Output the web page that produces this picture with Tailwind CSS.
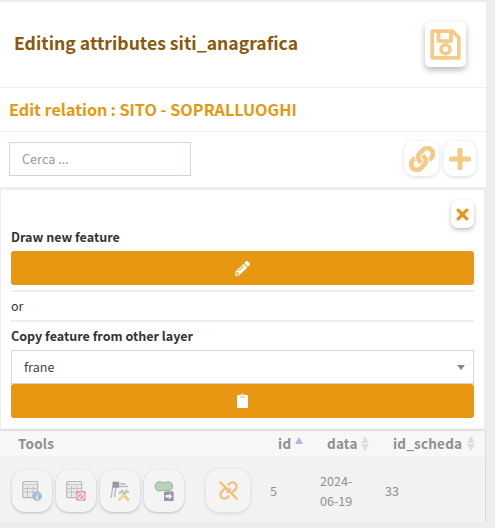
<!DOCTYPE html>
<html lang="en">
<head>
<meta charset="utf-8">
<title>Editing attributes</title>
<script src="https://cdn.jsdelivr.net/npm/@tailwindcss/browser@4"></script>
</head>
<body class="w-[495px] h-[528px] overflow-hidden bg-[#ededed] pt-[2px] text-[#333] font-['Noto_Sans_CJK_SC',sans-serif]">
<main class="w-[486px]">
  <header class="flex h-[86px] items-center justify-between border-b border-[#f0f0f0] bg-white pr-[20px] pl-[14px]">
    <h1 class="mb-[3px] text-[17.6px] leading-6 font-bold whitespace-nowrap text-[#8b590c]">Editing attributes siti_anagrafica</h1>
    <button class="mb-[1px] flex h-[45px] w-[41px] items-center justify-center rounded-[5px] bg-white shadow-[0_3px_6px_rgba(0,0,0,0.28)]">
      <svg class="size-[31px]" viewBox="0 0 31 31" fill="none" stroke="#f4ca87" stroke-width="3.7" stroke-linejoin="round"><path d="M2.2 2.2H22.5L28.8 8.5V28.8H2.2ZM8.5 2.2V12H21V2.2"/><circle cx="15.5" cy="20.3" r="4.5" stroke-width="3.5"/></svg>
    </button>
  </header>
  <div class="flex h-[44px] items-center border-b border-[#f0f0f0] bg-white pb-[1px] pl-[9px]">
    <h2 class="text-[16.2px] leading-6 font-bold whitespace-nowrap text-[#e89712]">Edit relation<span class="ml-[3px]">: SITO - SOPRALLUOGHI</span></h2>
  </div>
  <div class="flex h-[55px] items-center bg-white pr-[10px] pb-[2px] pl-[9px]">
    <input class="h-[34px] w-[182px] border border-[#d2d6de] px-3 text-[12.7px] text-[#555] placeholder:text-[#999]" placeholder="Cerca ...">
    <button class="ml-auto flex h-[35px] w-[35px] items-center justify-center rounded-[10px] bg-white shadow-[0_1px_4px_rgba(0,0,0,0.14)]">
      <svg class="size-[26px]" viewBox="0 0 512 512" fill="#f4ca87" stroke="#f4ca87" stroke-width="14"><path d="M326.612 185.391c59.747 59.809 58.927 155.698.36 214.59-.11.12-.24.25-.36.37l-67.2 67.2c-59.27 59.27-155.699 59.262-214.96 0-59.27-59.26-59.27-155.7 0-214.96l37.106-37.106c9.84-9.84 26.786-3.3 27.294 10.606.648 17.722 3.826 35.527 9.69 52.721 1.986 5.822.567 12.262-3.783 16.612l-13.087 13.087c-28.026 28.026-28.905 73.66-1.155 101.96 28.024 28.579 74.086 28.749 102.325.51l67.2-67.19c28.191-28.191 28.073-73.757 0-101.83-3.701-3.694-7.429-6.564-10.341-8.569a16.037 16.037 0 0 1-6.947-12.606c-.396-10.567 3.348-21.456 11.698-29.806l21.054-21.055c5.521-5.521 14.182-6.199 20.584-1.731a152.482 152.482 0 0 1 20.522 17.197zM467.547 44.449c-59.261-59.262-155.69-59.27-214.96 0l-67.2 67.2c-.12.12-.25.25-.36.37-58.566 58.892-59.387 154.781.36 214.59a152.454 152.454 0 0 0 20.521 17.196c6.402 4.468 15.064 3.789 20.584-1.731l21.054-21.055c8.35-8.35 12.094-19.239 11.698-29.806a16.037 16.037 0 0 0-6.947-12.606c-2.912-2.005-6.64-4.875-10.341-8.569-28.073-28.073-28.191-73.639 0-101.83l67.2-67.19c28.239-28.239 74.3-28.069 102.325.51 27.75 28.3 26.872 73.934-1.155 101.96l-13.087 13.087c-4.35 4.35-5.769 10.79-3.783 16.612 5.864 17.194 9.042 34.999 9.69 52.721.509 13.906 17.454 20.446 27.294 10.606l37.106-37.106c59.271-59.259 59.271-155.699.001-214.959z"/></svg>
    </button>
    <button class="ml-[5px] flex h-[35px] w-[32px] items-center justify-center rounded-[9px] bg-white shadow-[0_1px_4px_rgba(0,0,0,0.14)]">
      <svg class="size-[22px]" viewBox="0 0 22 22" fill="#f4ca87"><rect x="8.500" y="0" width="5" height="22" rx="1.500"/><rect x="0" y="8.500" width="22" height="5" rx="1.500"/></svg>
    </button>
  </div>

  <section class="mt-[3px] ml-[1px] h-[238px] w-[483px] bg-white px-[10px] pt-[10px]">
    <div class="flex justify-end">
      <button class="flex h-[28px] w-[23px] items-center justify-center rounded-[7px] bg-white shadow-[0_2px_4px_rgba(0,0,0,0.25)]">
        <svg class="size-[13px]" viewBox="0 0 13 13" stroke="#e89712" stroke-width="3.2" stroke-linecap="round"><path d="M2.2 2.2L10.8 10.8M10.8 2.2L2.2 10.8"/></svg>
      </button>
    </div>
    <div class="mt-[-1px] h-[24px] text-[12.55px] leading-5 font-bold">Draw new feature</div>
    <button class="flex h-[34px] w-full items-center justify-center rounded-[3px] bg-[#e89712]">
      <svg class="size-[15px]" viewBox="0 0 512 512" fill="#fff"><path d="M497.900 142.100l-46.100 46.100c-4.700 4.700-12.300 4.700-17 0l-111-111c-4.700-4.700-4.700-12.300 0-17l46.100-46.100c18.700-18.700 49.100-18.700 67.900 0l60.100 60.100c18.800 18.700 18.800 49.100 0 67.900zM284.200 99.800L21.600 362.400.4 483.900c-2.900 16.400 11.400 30.600 27.800 27.800l121.500-21.300 262.600-262.600c4.700-4.700 4.700-12.300 0-17l-111-111c-4.800-4.700-12.400-4.700-17.100 0zM124.100 339.900c-5.500-5.500-5.500-14.300 0-19.800l154-154c5.500-5.500 14.300-5.500 19.800 0s5.500 14.300 0 19.800l-154 154c-5.500 5.500-14.300 5.500-19.800 0zM88 424h48v36.300l-64.500 11.300-31.100-31.100L51.700 376H88v48z"/></svg>
    </button>
    <div class="mt-[5px] flex h-[32px] items-center border-y-2 border-[#eee] text-[12.5px] leading-5">or</div>
    <div class="flex h-[28px] items-center text-[12.55px] leading-5 font-bold">Copy feature from other layer</div>
    <div class="flex h-[34px] items-center justify-between border border-[#d2d6de] pr-[8px] pl-[12px] text-[12.6px] leading-5 text-[#444]">
      <span>frane</span>
      <svg class="h-[5px] w-[8px]" viewBox="0 0 8 5" fill="#888"><path d="M0 0H8L4 5Z"/></svg>
    </div>
    <button class="flex h-[34px] w-full items-center justify-center rounded-[3px] bg-[#e89712]">
      <svg class="mb-[1px] h-[15px] w-[11px]" viewBox="0 0 11 15"><path fill="#fff" d="M1.300 1.900H3.600A1.950 1.950 0 0 1 7.400 1.900H9.700Q11 1.900 11 3.200V13.700Q11 15 9.700 15H1.300Q0 15 0 13.700V3.200Q0 1.900 1.300 1.900Z"/><circle cx="5.500" cy="1.900" r=".6" fill="#e89712"/><path d="M3 4H8" stroke="#e89712" stroke-width=".7"/></svg>
    </button>
  </section>

  <section class="mt-[2px] w-[486px] border-t border-r border-[#dcdcdc] text-[#909090]">
    <div class="flex h-[26px] items-center bg-[#f7f7f7] pb-[2px] text-[13.5px] leading-5 font-bold tracking-[0.45px]">
      <span class="w-[259px] pl-[18px] tracking-[0.2px]">Tools</span>
      <div class="flex w-[65px] items-center pl-[19px]"><span class="w-[17px]">id</span>
        <svg class="mt-[-6px] h-[7px] w-[8px]" viewBox="0 0 8 7" fill="#b2b4e4"><path d="M4 0L8 7H0Z"/></svg></div>
      <div class="flex w-[66px] items-center pl-[3px]"><span class="w-[34px] tracking-[0.2px]">data</span>
        <svg class="mt-[1px] h-[15px] w-[8px]" viewBox="0 0 8 15" fill="#dedede"><path d="M4 0L8 7H0ZM0 8H8L4 15Z"/></svg></div>
      <div class="flex items-center pl-[3px]"><span class="w-[74px] tracking-[0.2px]">id_scheda</span>
        <svg class="mt-[1px] h-[15px] w-[8px]" viewBox="0 0 8 15" fill="#dedede"><path d="M4 0L8 7H0ZM0 8H8L4 15Z"/></svg></div>
    </div>
    <div class="flex h-[65px] items-center bg-[#f2f2f2] pt-[2px] text-[12.6px] leading-5">
      <div class="flex w-[269px] items-center gap-[4px] pl-[12px]">
        <button class="flex h-[42px] w-[40px] items-center justify-center rounded-[13px] bg-[#f4f4f4] shadow-[0_1px_3px_rgba(0,0,0,0.22)]">
          <svg class="size-[20px]" viewBox="0 0 20 20"><rect x=".7" y=".7" width="15" height="16" rx="1" fill="#e9e9e9" stroke="#b9b9b9" stroke-width="1.200"/><path d="M1 3.500H16M1 7.500H16M1 11H16M5.500 5V16M11 5V16" stroke="#c4c4c4" stroke-width="1" fill="none"/><path d="M2 2H15" stroke="#f7f7f7"/><circle cx="15.200" cy="15.200" r="4.800" fill="#a6bddb"/><path d="M15.800 12V13M15.500 14.200L14.800 17.500Q15 18.200 16 17.400" stroke="#f4f4f4" stroke-width="1.300" fill="none"/></svg>
        </button>
        <button class="flex h-[42px] w-[40px] items-center justify-center rounded-[13px] bg-[#f4f4f4] shadow-[0_1px_3px_rgba(0,0,0,0.22)]">
          <svg class="size-[20px]" viewBox="0 0 20 20"><rect x=".7" y=".7" width="15" height="16" rx="1" fill="#e9e9e9" stroke="#b9b9b9" stroke-width="1.200"/><path d="M1 3.500H16M1 7.500H16M1 11H16M5.500 5V16M11 5V16" stroke="#c4c4c4" stroke-width="1" fill="none"/><path d="M2 2H15" stroke="#f7f7f7"/><rect x="10.200" y="10.200" width="9.500" height="9.500" fill="#e49a9d"/><circle cx="15" cy="15" r="3.200" fill="none" stroke="#f7e6e6" stroke-width="1.200"/><path d="M12.800 17.200L17.200 12.800" stroke="#f7e6e6" stroke-width="1.200"/></svg>
        </button>
        <button class="flex h-[42px] w-[40px] items-center justify-center rounded-[13px] bg-[#f4f4f4] shadow-[0_1px_3px_rgba(0,0,0,0.22)]">
          <svg class="size-[20px]" viewBox="0 0 20 20" fill="none"><path d="M3 5L1 17M6 6L4.500 16M6 2.500L16 3M6 5.500H18" stroke="#bdbdbd" stroke-width="1.500"/><rect x="2.500" y=".7" width="6.500" height="6" fill="#999"/><path d="M13 13.500L18 18.500" stroke="#e6cf7c" stroke-width="2.800" stroke-linecap="round"/><path d="M9.500 18.500L14.500 13.500" stroke="#eadc95" stroke-width="2.800" stroke-linecap="round"/><path d="M9 12.500L12.500 9.500L14 12.500M14 13L17 10.500L16 8.500M17 11L19 10.500" stroke="#bcbcbc" stroke-width="1.700"/></svg>
        </button>
        <button class="flex h-[42px] w-[40px] items-center justify-center rounded-[13px] bg-[#f4f4f4] shadow-[0_1px_3px_rgba(0,0,0,0.22)]">
          <svg class="size-[20px]" viewBox="0 0 20 20"><path d="M4 1C7 0 8 2 11 1.500C15 0 18.500 1 18.500 5C18.500 9 16 10.500 13 9.500C9 8.500 8 10 5 10C0 10 0 2 4 1Z" fill="#b5d4b5" stroke="#a2aaa2"/><rect x="10" y="10.500" width="9.600" height="9.500" rx=".6" fill="#9099a3"/><path d="M11.500 14H15V12.200L18.300 15.300L15 18.400V16.600H11.500Z" fill="#f5f5f5"/></svg>
        </button>
        <button class="ml-[18px] flex h-[43px] w-[44px] items-center justify-center rounded-[13px] bg-[#f4f4f4] shadow-[0_1px_4px_rgba(0,0,0,0.12)]">
          <svg class="size-[19px]" viewBox="0 0 19 19" fill="none" stroke="#efc27c" stroke-width="2.400"><path d="M8.800 4.200L10.500 2.600A4 4 0 0 1 16.400 8.300L14.700 10Q13.800 10.800 12.800 10.900M10.300 14.700L8.500 16.400A4 4 0 0 1 2.600 10.700L4.300 9Q5.200 8.200 6.200 8.100"/><path d="M11.300 9.600Q11 7.800 9.700 7.100M7.700 9.500Q8.100 11.100 9.400 11.900" stroke-width="2"/><path d="M1.400 1.400L17.600 17.600" stroke-linecap="round" stroke-width="2.300"/></svg>
        </button>
      </div>
      <span class="w-[51px] pl-[1px]">5</span>
      <span class="w-[65px]">2024-<br>06-19</span>
      <span>33</span>
    </div>
  </section>
</main>
</body>
</html>
